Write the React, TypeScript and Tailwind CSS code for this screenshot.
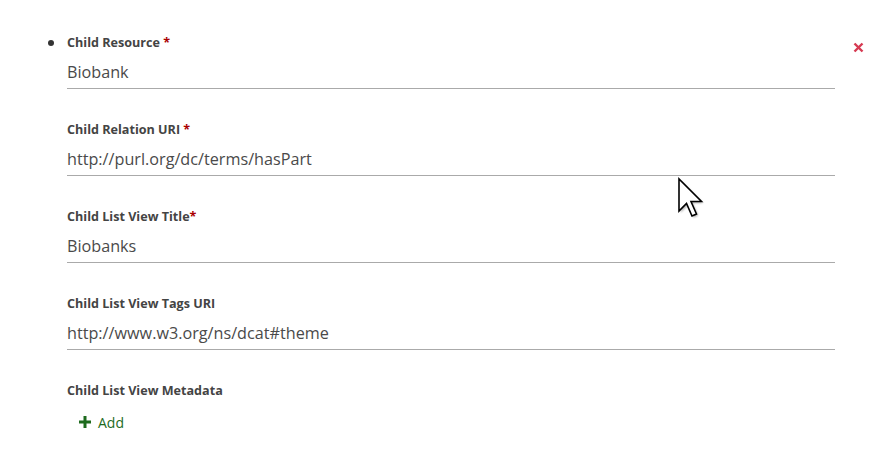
import React from "react";

const fields = [
  { label: "Child Resource", star: " *", value: "Biobank" },
  { label: "Child Relation URI", star: " *", value: "http://purl.org/dc/terms/hasPart" },
  { label: "Child List View Title", star: "*", value: "Biobanks" },
  { label: "Child List View Tags URI", star: "", value: "http://www.w3.org/ns/dcat#theme" },
];

export default function App() {
  return (
    <div
      className="relative w-[892px] h-[455px] bg-white overflow-hidden"
      style={{ fontFamily: '"Open Sans", sans-serif' }}
    >
      <div className="flex pt-[34px] pl-[48px]">
        <div className="w-[19px] shrink-0 pt-[6px]">
          <div className="w-[6px] h-[6px] rounded-full bg-[#333]" />
        </div>
        <div className="w-[768px]">
          {fields.map((f, i) => (
            <div key={i} className="mb-[32px]">
              <div className="h-[18px] leading-[18px] text-[12.6px] font-bold text-[#444]">
                {f.label}
                {f.star && <span className="text-[#a00]">{f.star}</span>}
              </div>
              <div className="mt-[5px] h-[32px] border-b border-[#aaa] text-[16.2px] leading-[30px] text-[#4a4a4a]">
                {f.value}
              </div>
            </div>
          ))}
          <div className="h-[18px] leading-[18px] text-[12.6px] font-bold text-[#444]">
            Child List View Metadata
          </div>
          <div className="mt-[13px] ml-[12px] flex items-center gap-[7px] h-[18px] text-[14px] text-[#1e6b1e]">
            <svg width="12" height="12" viewBox="0 0 12 12">
              <rect x="4.5" y="0" width="3" height="12" fill="#1e6b1e" />
              <rect x="0" y="4.5" width="12" height="3" fill="#1e6b1e" />
            </svg>
            <span>Add</span>
          </div>
        </div>
        <div className="ml-[18px] pt-[8px]">
          <svg width="11" height="11" viewBox="0 0 11 11">
            <path d="M1.5 1.5 L9.5 9.5 M9.5 1.5 L1.5 9.5" stroke="#d63a52" strokeWidth="2.4" />
          </svg>
        </div>
      </div>
      <svg
        className="absolute left-[677px] top-[177px]"
        width="28"
        height="44"
        viewBox="0 0 28 44"
      >
        <defs>
          <filter id="sh" x="-30%" y="-30%" width="160%" height="160%">
            <feGaussianBlur stdDeviation="1.2" />
          </filter>
        </defs>
        <path
          d="M2 2 L2 34 L9.5 26.5 L15 39 L19.5 37 L14 24.5 L24.5 24.5 Z"
          fill="#000"
          opacity="0.35"
          filter="url(#sh)"
          transform="translate(1.5,1.5)"
        />
        <path
          d="M2 2 L2 34 L9.5 26.5 L15 39 L19.5 37 L14 24.5 L24.5 24.5 Z"
          fill="#fff"
          stroke="#000"
          strokeWidth="1.6"
          strokeLinejoin="miter"
        />
      </svg>
    </div>
  );
}
